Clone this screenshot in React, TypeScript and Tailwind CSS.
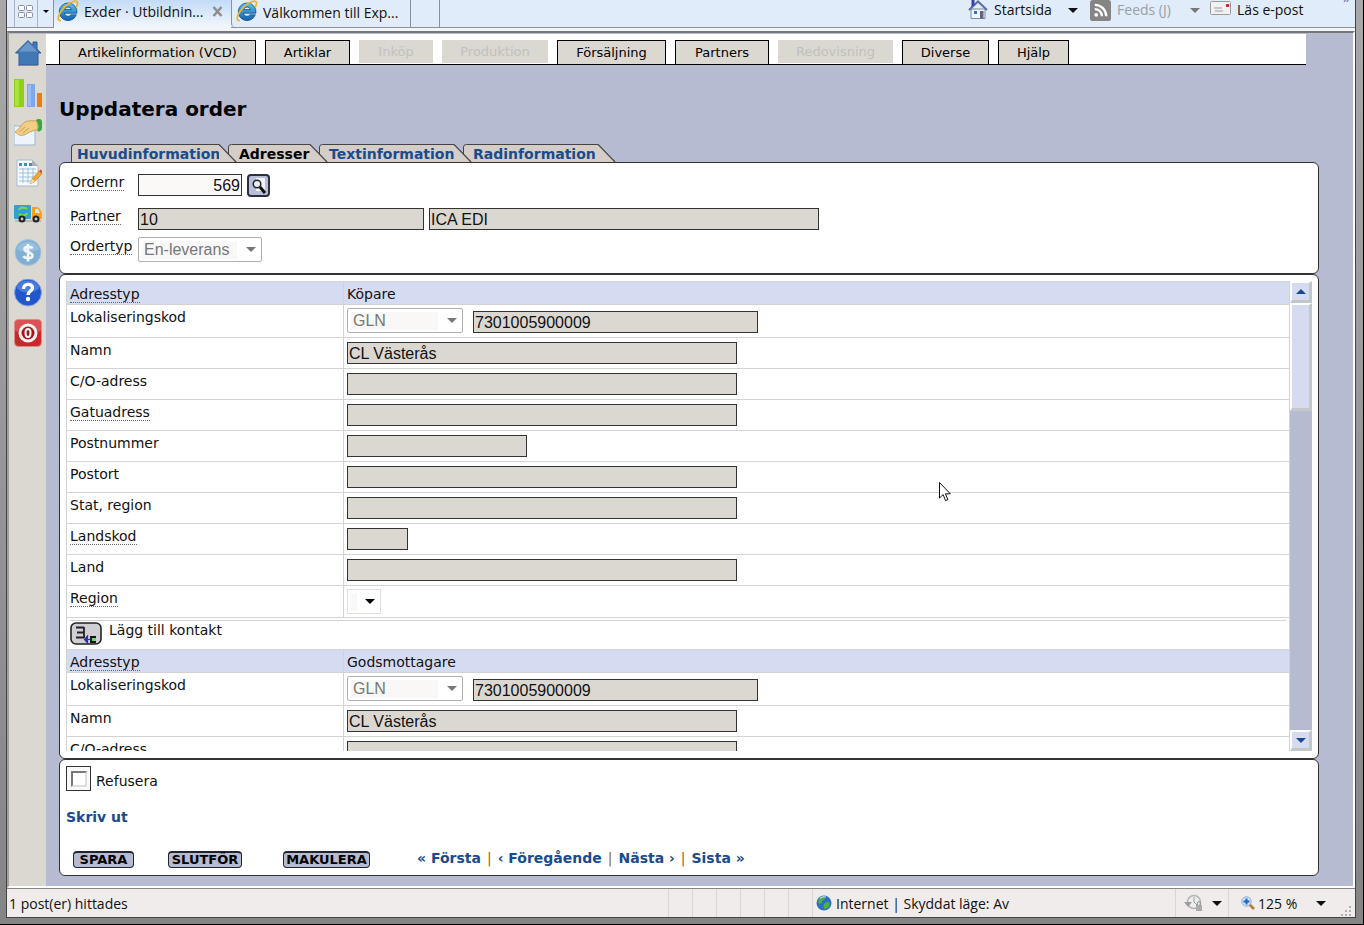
import { useId } from "react";
import type { ReactNode } from "react";
import clsx from "clsx";

const ui = "font-['Open_Sans','Noto_Sans',sans-serif]";
const field =
  "block h-[22px] border border-[#333] px-px pt-px font-['Liberation_Sans',Arial,sans-serif] text-base leading-5 text-[#111] outline-none";

const menu = [
  { label: "Artikelinformation (VCD)", width: "w-[197px]" },
  { label: "Artiklar", width: "w-[85px]" },
  { label: "Inköp", width: "w-[74px]", disabled: true },
  { label: "Produktion", width: "w-[106px]", disabled: true },
  { label: "Försäljning", width: "w-[109px]" },
  { label: "Partners", width: "w-[94px]" },
  { label: "Redovisning", width: "w-[115px]", disabled: true },
  { label: "Diverse", width: "w-[87px]" },
  { label: "Hjälp", width: "w-[71px]" },
];

const tabs = [
  { label: "Huvudinformation", width: "w-[148px] rounded-tl border-l pl-[5px]" },
  { label: "Adresser", width: "w-[73px] pl-[2px]", active: true },
  { label: "Textinformation", width: "w-[126px] pl-px" },
  { label: "Radinformation", width: "w-[126px] pl-px" },
];

const addressRows = [
  { label: "Namn", width: "w-[390px]", name: true },
  { label: "C/O-adress", width: "w-[390px]" },
  { label: "Gatuadress", width: "w-[390px]", help: true },
  { label: "Postnummer", width: "w-[180px]" },
  { label: "Postort", width: "w-[390px]" },
  { label: "Stat, region", width: "w-[390px]" },
  { label: "Landskod", width: "w-[61px]", help: true },
  { label: "Land", width: "w-[390px]" },
];

function Caret({ className }: { className?: string }) {
  return (
    <svg aria-hidden viewBox="0 0 10 5" className={clsx("h-[5px] w-[10px] shrink-0 fill-current", className)}>
      <path d="M0 0h10L5 5z" />
    </svg>
  );
}

function IeLogo() {
  return (
    <svg aria-hidden viewBox="0 0 22 22" className="size-[22px] shrink-0">
      <defs>
        <linearGradient id="ie" x1="0" y1="0" x2="0" y2="1">
          <stop offset="0" stopColor="#5cc3f2" />
          <stop offset="1" stopColor="#1260a8" />
        </linearGradient>
      </defs>
      <path
        d="M11 3a8.800 8.800 0 1 0 8.300 11.800h-5.400a3.600 3.600 0 0 1-6.500-1.600h12.500A8.900 8.900 0 0 0 11 3zM7.600 9.600a3.500 3.500 0 0 1 6.800 0z"
        fill="url(#ie)"
        stroke="#0d4f8f"
        strokeWidth=".8"
      />
      <path
        d="M4 20.600C.2 21.200.2 16.500 4.700 10.500 9.500 4 17 .2 19.600 1.500c1.600.9.9 3.500-.5 6"
        fill="none"
        stroke="#edb52c"
        strokeWidth="1.800"
      />
    </svg>
  );
}

function BrowserBar() {
  return (
    <div className={clsx(ui, "flex h-7 border-b border-[#8c9099] bg-[#e0ecf9] text-[14px] leading-5 text-[#111]")}>
      <button aria-label="Snabbflikar" className="ml-[7px] flex w-[24px] items-center justify-center border-x border-[#aab4c2] pb-1">
        <svg viewBox="0 0 16 14" className="h-[14px] w-[16px] fill-white stroke-[#8b8fa5]">
          <rect x=".5" y=".5" width="6" height="5" rx="1" />
          <rect x="8.500" y=".5" width="6" height="5" rx="1" />
          <rect x=".5" y="7.500" width="6" height="5" rx="1" />
          <rect x="8.500" y="7.500" width="6" height="5" rx="1" />
        </svg>
      </button>
      <button aria-label="Fliklista" className="flex w-[15px] items-center justify-center pb-1">
        <svg viewBox="0 0 6 3" className="h-[3px] w-[6px]">
          <path d="M0 0h6L3 3z" />
        </svg>
      </button>
      <div className="-mb-px flex w-[178px] items-start border-l border-[#8c9099] bg-linear-to-b from-[#c3dbf8] to-[#f3f7fc] pl-[3px]">
        <IeLogo />
        <span className="ml-[5px] mt-[2px] w-[128px] whitespace-nowrap">Exder · Utbildnin...</span>
        <button aria-label="Stäng flik" className="mt-[6px]">
          <svg viewBox="0 0 11 11" className="size-[11px]">
            <path d="M1.500 1l8 9M9.500 1l-8 9" stroke="#8e8e8e" strokeWidth="2.600" />
          </svg>
        </button>
      </div>
      <div className="flex w-[180px] items-start rounded-bl border-x border-[#8c9099] pl-1">
        <IeLogo />
        <span className="ml-[5px] mt-[3px] whitespace-nowrap">Välkommen till Exp...</span>
      </div>
      <div className="w-[29px] border-r border-[#8c9099]" />
      <div className="ml-auto flex items-start pr-[5px]">
        <svg aria-hidden viewBox="0 0 20 20" className="size-5">
          <path d="M3 9h14v9.500H3z" fill="#f4f5f9" stroke="#8088a0" />
          <path d="M1 10L10 1.500 19 10" fill="none" stroke="#5a6da8" strokeWidth="2" />
          <path d="M3.500 0h3v5l-3 2z" fill="#3044b0" />
          <path d="M6 11h3v3H6z" fill="#3f75bd" />
          <path d="M12 11h3.500v7.500H12z" fill="#5c6780" />
        </svg>
        <span className="ml-[6px] w-[74px]">Startsida</span>
        <Caret className="mt-2" />
        <svg aria-hidden viewBox="0 0 22 22" className="ml-3 size-[21px]">
          <rect width="22" height="22" rx="3" fill="#858585" />
          <circle cx="6.500" cy="15.500" r="2" fill="#fff" />
          <path d="M5 9.500a7.500 7.500 0 0 1 7.500 7.500M5 5a12 12 0 0 1 12 12" fill="none" stroke="#fff" strokeWidth="2.400" />
        </svg>
        <span className="ml-[6px] w-[73px] text-[#9a9fa6]">Feeds (J)</span>
        <Caret className="mt-2 text-[#777]" />
        <svg aria-hidden viewBox="0 0 21 14" className="ml-[10px] mt-px h-[14px] w-[21px]">
          <rect x=".5" y=".5" width="20" height="13" rx="1" fill="#f1f1f1" stroke="#9b9b9b" />
          <path d="M4 7h8M5 10h8" stroke="#9c9c9c" />
          <path d="M16 3h3v3h-3z" fill="#d62b2b" />
        </svg>
        <span className="ml-[6px] w-[106px]">Läs e-post</span>
        <span className="-mt-3 text-[#6a73a8]">»</span>
      </div>
    </div>
  );
}

function SideIcon({ label, children }: { label: string; children: ReactNode }) {
  return (
    <a href="#" aria-label={label} className="block size-7">
      <svg viewBox="0 0 28 28" className="size-7">
        {children}
      </svg>
    </a>
  );
}

function Sidebar() {
  return (
    <nav aria-label="Genvägar" className="flex w-[37px] shrink-0 flex-col items-center gap-3 bg-[#dbd8d1] pt-[5px]">
      <SideIcon label="Hem">
        <path d="M14 1.500L1.500 14H5v12h19V14h3l-4-4V3h-4v2.500h-1z" fill="#4378b6" stroke="#2d5c98" />
        <path d="M14 3L4.500 12.500h19z" fill="#79a5d6" opacity=".7" />
        <path d="M4 26.500h20" stroke="#8a8a86" />
      </SideIcon>
      <SideIcon label="Statistik">
        <rect x="0" y="0" width="10" height="28" fill="#8fd012" />
        <rect x="1" y="1" width="4" height="26" fill="#a9e23c" />
        <rect x="13" y="5" width="8" height="23" fill="#7da6ee" />
        <rect x="14" y="6" width="3" height="21" fill="#9abcf5" />
        <rect x="23" y="14" width="5" height="14" fill="#ee7c14" />
      </SideIcon>
      <SideIcon label="Avtal">
        <path d="M0 7h21v19H0z" fill="#eef4fb" stroke="#9db6cf" />
        <path d="M1 13c4-2 6-8 10-10 4-2 9-1 12-1l1 8c-4 2-7 2-10 4-4 3-9 3-10 1z" fill="#f2cd86" stroke="#c1934a" strokeWidth=".8" />
        <path d="M5 13l6-5M9 14l6-5" stroke="#c1934a" strokeWidth=".8" />
        <path d="M22 1c3-2 6-1 6 2v6c0 3-3 4-5 3 2-3 2-7-1-11z" fill="#35a83f" />
      </SideIcon>
      <SideIcon label="Kalkylblad">
        <path d="M3 1h15l6 6v20H3z" fill="#f6fafd" stroke="#a9b9c8" />
        <path d="M18 1l6 6h-6z" fill="#a9b2ba" />
        <path d="M5 5.500h3m2 0h3m2 0h3" stroke="#3c8fb8" strokeWidth="3" />
        <path d="M5 10h17M5 14h17M5 18h17M5 22h15M9 9v15M14 9v15M19 9v15" stroke="#9cc0da" />
        <path d="M16 25l2-5 7-8 3 2.500-7 8z" fill="#f0a531" stroke="#c77a1c" strokeWidth=".6" />
        <path d="M25 12l3 2.500 1-2-2.500-2z" fill="#d9472f" />
        <path d="M16 25l2-5 3 2.500z" fill="#f5dfb5" />
      </SideIcon>
      <SideIcon label="Leveranser">
        <rect x="0" y="6" width="17" height="14" rx="1" fill="#2fa2d0" />
        <path d="M5 11c1-3 6-3 8-1M13 14c-1 3-6 3-8 1" fill="none" stroke="#7fd451" strokeWidth="2.200" />
        <path d="M18 8h5c3 1 5 5 5 7v5H18z" fill="#f5a21c" />
        <path d="M21 10h3l2 4h-5z" fill="#d4ebf5" />
        <path d="M1 22h26" stroke="#999" />
        <circle cx="8" cy="20" r="3.500" fill="#222" />
        <circle cx="8" cy="20" r="1.400" fill="#ccc" />
        <circle cx="22" cy="20" r="3.500" fill="#222" />
        <circle cx="22" cy="20" r="1.400" fill="#ccc" />
      </SideIcon>
      <SideIcon label="Ekonomi">
        <circle cx="14" cy="13.500" r="13" fill="#7fb0d4" stroke="#a4c4dc" />
        <path d="M3 10a12 12 0 0 1 22 0c-7 4-15 4-22 0z" fill="#a6cae3" opacity=".6" />
        <path
          d="M18.500 9.500c-1-2-8-2.600-8 .8 0 3.400 8 2.700 8 6.300 0 3.600-7.500 3.200-9 .6M14 5v17.500"
          fill="none"
          stroke="#f1f5f8"
          strokeWidth="2.600"
        />
      </SideIcon>
      <SideIcon label="Hjälp">
        <circle cx="14" cy="13.500" r="13.500" fill="#2157cc" stroke="#8aa5dc" />
        <path d="M2.500 9a12.500 12.500 0 0 1 23 0c-7 6-16 6-23 0z" fill="#5d8ae6" opacity=".7" />
        <path d="M9.500 10c0-6 9-6 9-1 0 3.500-4.500 3-4.500 7" fill="none" stroke="#fff" strokeWidth="3.400" />
        <circle cx="14" cy="20" r="2.200" fill="#fff" />
      </SideIcon>
      <SideIcon label="Logga ut">
        <rect x=".5" y=".5" width="27" height="27" rx="4" fill="#c9272b" stroke="#dc8b88" />
        <path d="M1 4q0-3 3-3h20q3 0 3 3v8q-13 4-26 0z" fill="#e46e6c" opacity=".6" />
        <circle cx="14" cy="14" r="8" fill="#a5191d" stroke="#f3f0ef" strokeWidth="3" />
        <ellipse cx="14" cy="14" rx="2.500" ry="4" fill="none" stroke="#fff" strokeWidth="2" />
      </SideIcon>
    </nav>
  );
}

function MenuBar() {
  return (
    <nav className="mr-[47px] flex h-[31px] items-start gap-[9px] border-b border-black bg-white pl-[13px] pt-[6px]">
      {menu.map((item) => (
        <button
          key={item.label}
          disabled={item.disabled}
          className={clsx(
            "shrink-0 whitespace-nowrap bg-[#dbd8d1] text-[13px] leading-[22px]",
            item.width,
            item.disabled ? "h-[23px] text-[#c2c0bd]" : "h-6 border border-b-0 border-black text-black",
          )}
        >
          {item.label}
        </button>
      ))}
    </nav>
  );
}

function TabSlant({ last }: { last: boolean }) {
  return (
    <svg aria-hidden viewBox="0 0 18 18" className="h-[18px] w-[18px] shrink-0">
      <path d="M0 0L17 18H0z" fill="#d5cec8" />
      {!last && (
        <>
          <path d="M9 10V3q0-2.500 3-2.500h6V18h-1z" fill="#d5cec8" />
          <path d="M9.500 10V3q0-2.500 3-2.500H18" fill="none" stroke="#444" />
        </>
      )}
      <path d="M0 .5L17 18" fill="none" stroke="#444" strokeWidth="1.200" />
    </svg>
  );
}

function TabStrip() {
  return (
    <div className="flex pl-3">
      {tabs.map((tab, i) => (
        <div key={tab.label} className="flex">
          <a
            href="#"
            className={clsx(
              "h-[18px] whitespace-nowrap border-t border-[#444] bg-[#d5cec8] text-[14px] font-bold leading-[18px]",
              tab.width,
              tab.active ? "text-black" : "text-[#1a4b8c]",
            )}
          >
            {tab.label}
          </a>
          <TabSlant last={i === tabs.length - 1} />
        </div>
      ))}
    </div>
  );
}

function Panel({ className, children }: { className?: string; children: ReactNode }) {
  return <section className={clsx("rounded-md border border-[#333] bg-white", className)}>{children}</section>;
}

function Label({ htmlFor, help, children }: { htmlFor: string; help?: boolean; children: ReactNode }) {
  return (
    <label htmlFor={htmlFor} className={clsx(help && "border-b border-dotted border-[#666]")}>
      {children}
    </label>
  );
}

function Select({ id, value, wrap, inner }: { id: string; value: string; wrap: string; inner: string }) {
  return (
    <span
      className={clsx(
        "flex h-[25px] shrink-0 items-center border pl-[3px]",
        wrap,
        value ? "rounded-xs border-[#b0b0b0] text-[#777]" : "border-[#dddfe8] text-black",
      )}
    >
      <select
        id={id}
        disabled={!!value}
        className={clsx(
          "h-[18px] appearance-none bg-[#f9f8f6] pl-[2px] font-['Liberation_Sans',Arial,sans-serif] text-base leading-[18px] outline-none",
          inner,
        )}
      >
        <option>{value}</option>
      </select>
      <Caret className="ml-auto mr-[5px]" />
    </span>
  );
}

function OrderHeader() {
  return (
    <Panel className="h-[112px] pl-[10px] pt-[11px]">
      <div className="flex h-[34px] items-start">
        <div className="w-[68px] shrink-0 leading-4">
          <Label htmlFor="ordernr" help>Ordernr</Label>
        </div>
        <input id="ordernr" defaultValue="569" className={clsx(field, "w-[104px] bg-[#faf9f7] text-right")} />
        <button
          aria-label="Sök order"
          className="ml-[5px] flex size-[23px] items-center justify-center rounded border-2 border-[#2c2f3c] bg-[#b9bfda]"
        >
          <svg viewBox="0 0 18 18" className="size-[18px]">
            <path d="M6 1h9v13H6z" fill="#f3f3f6" />
            <circle cx="7" cy="7" r="3.800" fill="#e9ecf4" stroke="#222" strokeWidth="1.500" />
            <path d="M10 10l5 6" stroke="#111" strokeWidth="3" />
          </svg>
        </button>
      </div>
      <div className="flex h-[29px] items-start">
        <div className="w-[68px] shrink-0 leading-4">
          <Label htmlFor="partner" help>Partner</Label>
        </div>
        <input id="partner" readOnly value="10" className={clsx(field, "w-[286px] bg-[#dbd8d1]")} />
        <input
          aria-label="Partnernamn"
          readOnly
          value="ICA EDI"
          className={clsx(field, "ml-[5px] w-[390px] bg-[#dbd8d1]")}
        />
      </div>
      <div className="flex items-start">
        <div className="w-[68px] shrink-0 leading-[18px]">
          <Label htmlFor="ordertyp" help>Ordertyp</Label>
        </div>
        <Select id="ordertyp" value="En-leverans" wrap="w-[124px]" inner="w-[95px]" />
      </div>
    </Panel>
  );
}

function AddressBlock({ type, rows, contact }: { type: string; rows: typeof addressRows; contact?: boolean }) {
  const id = useId();
  const cell = "border-l border-t border-[#d3d3d3] px-[3px] align-top";
  return (
    <tbody>
      <tr className="h-[23px] bg-[#d5dbf1]">
        <th scope="row" className={clsx(cell, "pt-[2px] text-left font-normal")}>
          <span className="border-b border-dotted border-[#666]">Adresstyp</span>
        </th>
        <td className={clsx(cell, "pt-[2px]")}>{type}</td>
      </tr>
      <tr className="h-[33px]">
        <td className={clsx(cell, "pt-[2px]")}>
          <Label htmlFor={`${id}kod`}>Lokaliseringskod</Label>
        </td>
        <td className={clsx(cell, "pt-[3px]")}>
          <div className="flex items-end gap-[10px]">
            <Select id={`${id}kod`} value="GLN" wrap="w-[116px]" inner="w-[87px]" />
            <input
              aria-label="Lokaliseringsnummer"
              readOnly
              value="7301005900009"
              className={clsx(field, "w-[285px] bg-[#dbd8d1]")}
            />
          </div>
        </td>
      </tr>
      {rows.map((row) => (
        <tr key={row.label} className="h-[31px]">
          <td className={clsx(cell, "pt-[2px]")}>
            <Label htmlFor={id + row.label} help={row.help}>{row.label}</Label>
          </td>
          <td className={clsx(cell, "pt-[4px]")}>
            <input
              id={id + row.label}
              readOnly
              value={row.name ? "CL Västerås" : ""}
              className={clsx(field, "bg-[#dbd8d1]", row.width)}
            />
          </td>
        </tr>
      ))}
      {contact && (
        <>
          <tr className="h-[32px]">
            <td className={clsx(cell, "pt-[2px]")}>
              <Label htmlFor={`${id}region`} help>Region</Label>
            </td>
            <td className={clsx(cell, "pt-[3px]")}>
              <Select id={`${id}region`} value="" wrap="w-[34px]" inner="w-[6px]" />
            </td>
          </tr>
          <tr className="h-[32px]">
            <td colSpan={2} className={clsx(cell, "pt-[2px]")}>
              <button className="flex w-full items-start gap-[7px] border-t border-[#d3d3d3] pt-px text-left">
                <svg aria-hidden viewBox="0 0 32 23" className="h-[23px] w-8">
                  <rect x="1" y="1" width="30" height="21" rx="5" fill="#cfcfd4" stroke="#222" strokeWidth="1.600" />
                  <path d="M6 5.500h8M7 10.500h7M6 15.500h8M14 5v11" fill="none" stroke="#222" strokeWidth="1.800" />
                  <path d="M14 17.500h6M17.500 14l-3 3.500 3 3.500z" fill="#2a2fc0" stroke="#2a2fc0" strokeWidth="1.200" />
                  <path d="M26 15h-5v5h5" fill="none" stroke="#111" strokeWidth="1.800" />
                  <path d="M22 16h4v3h-4z" fill="#5fdc70" />
                </svg>
                <span className="leading-4">Lägg till kontakt</span>
              </button>
            </td>
          </tr>
        </>
      )}
    </tbody>
  );
}

function ScrollBar() {
  const bevel = "border-b-3 border-l-2 border-r-3 border-t-2 border-b-[#c3c7c8] border-l-white border-r-[#c3c7c8] border-t-white bg-[#d5dbf1]";
  return (
    <div className="flex w-[23px] shrink-0 flex-col border-l border-[#d3d3d3] bg-[#b6bbd2]">
      <button aria-label="Rulla upp" className={clsx("flex h-[22px] items-center justify-center text-[#164a8c]", bevel)}>
        <Caret className="rotate-180" />
      </button>
      <div className={clsx("h-[108px]", bevel)} />
      <button
        aria-label="Rulla ned"
        className={clsx("mt-auto flex h-[21px] items-center justify-center text-[#164a8c]", bevel)}
      >
        <Caret />
      </button>
    </div>
  );
}

function Footer() {
  const action =
    "mt-[3px] h-[17px] rounded border border-t-2 border-[#22242e] bg-[#b6bbd2] text-[13px] font-bold leading-[14px] text-black";
  const divider = <span aria-hidden className="font-normal text-[#8c6a1c]">|</span>;
  return (
    <Panel className="h-[117px] px-[6px] pt-[6px]">
      <div className="flex items-start gap-[5px]">
        <span className="flex size-[25px] items-center justify-center border border-[#333] bg-[#faf9f7]">
          <input
            id="refusera"
            type="checkbox"
            className="size-4 appearance-none border-2 border-b-[#ddd] border-l-[#777] border-r-[#ddd] border-t-[#777] bg-white"
          />
        </span>
        <label htmlFor="refusera" className="mt-[5px]">Refusera</label>
      </div>
      <a href="#" className="mt-4 block w-fit font-bold text-[#1a4b8c]">Skriv ut</a>
      <div className="mt-[21px] flex items-start pl-[7px]">
        <button className={clsx(action, "w-[61px]")}>SPARA</button>
        <button className={clsx(action, "ml-[34px] w-[74px]")}>SLUTFÖR</button>
        <button className={clsx(action, "ml-[41px] w-[87px]")}>MAKULERA</button>
        <nav aria-label="Bläddra" className="ml-[47px] flex gap-[6px] whitespace-nowrap font-bold text-[#1a4b8c]">
          <a href="#">« Första</a>
          {divider}
          <a href="#">‹ Föregående</a>
          {divider}
          <a href="#">Nästa ›</a>
          {divider}
          <a href="#">Sista »</a>
        </nav>
      </div>
    </Panel>
  );
}

function StatusBar() {
  return (
    <footer
      className={clsx(ui, "flex h-[29px] border-t border-[#858585] bg-[#f0eceb] text-[14px] leading-[29px] text-[#111]")}
    >
      <span className="pl-[2px]">1 post(er) hittades</span>
      <div className="ml-auto flex">
        {[1, 2, 3, 4, 5, 6].map((n) => (
          <span key={n} className="w-6 border-l border-[#d9d5d4]" />
        ))}
        <div className="flex w-[363px] items-center border-l border-[#d9d5d4] pl-[3px]">
          <svg aria-hidden viewBox="0 0 16 16" className="mr-[4px] size-4">
            <circle cx="8" cy="8" r="7.500" fill="#2c6fc4" />
            <path d="M3 3c3-2 6-2 6 0s-3 2-3 4-2 2-4 1zM9 8c2-2 5-1 5 1s-3 5-5 5-2-4 0-6z" fill="#4cb046" />
            <path d="M4 3q3-2 6-1" stroke="#d4e8fa" fill="none" />
          </svg>
          Internet | Skyddat läge: Av
        </div>
        <div className="flex w-[53px] items-center gap-[8px] border-l border-[#d9d5d4] pl-2">
          <svg aria-hidden viewBox="0 0 20 18" className="h-[18px] w-5">
            <circle cx="10" cy="8" r="6.500" fill="#eee" stroke="#b5b5b5" strokeWidth="1.500" />
            <path d="M10 3v5l3 3" fill="none" stroke="#999" />
            <path d="M0 8h8L4 13z" fill="#9c9c9c" />
            <path d="M12 11h6v6h-6z" fill="#aaa" />
            <path d="M13.500 11V9a1.500 1.500 0 0 1 3 0v2" fill="none" stroke="#999" />
          </svg>
          <Caret />
        </div>
        <div className="flex w-[127px] items-center border-l border-[#d9d5d4] pl-3">
          <svg aria-hidden viewBox="0 0 14 14" className="mr-[3px] size-[14px]">
            <path d="M8 8l5 5" stroke="#b87a35" strokeWidth="2.600" />
            <circle cx="5.500" cy="5.500" r="4.700" fill="#cfe4fa" stroke="#88aacc" />
            <path d="M5.500 2.500v6M2.500 5.500h6" stroke="#1667c0" strokeWidth="2" />
          </svg>
          <span className="w-[58px]">125 %</span>
          <Caret />
          <svg aria-hidden viewBox="0 0 12 12" className="ml-auto mr-[3px] size-3 self-end fill-[#b5b0ae]">
            <path d="M9 1h2v2H9zM9 5h2v2H9zM9 9h2v2H9zM5 5h2v2H5zM5 9h2v2H5zM1 9h2v2H1z" />
          </svg>
        </div>
      </div>
    </footer>
  );
}

export default function App() {
  return (
    <div className="flex min-h-screen flex-col border-b border-r border-black bg-[#9b9b9b] bg-linear-to-b from-[#a8a8a8] to-[#858585] pb-[6px] pl-[6px] pr-[7px] font-['DejaVu_Sans',Verdana,sans-serif] text-[14px] leading-5 text-[#111]">
      <div className="flex flex-1 flex-col border-x border-b border-[#444] bg-[#f3f4f7]">
        <BrowserBar />
        <div className="mt-[3px] flex flex-1 border-2 border-b-white border-l-[#a0a0a0] border-r-white border-t-[#777] bg-[#b6bbd2] pt-px">
          <Sidebar />
          <main className="relative min-w-0 flex-1">
            <MenuBar />
            <div className="pb-[9px] pl-[13px] pr-[34px] pt-[30px]">
              <h1 className="text-[20px] font-bold leading-7 text-black">Uppdatera order</h1>
              <div className="mt-[21px]">
                <TabStrip />
              </div>
              <OrderHeader />
              <Panel className="px-[6px] pb-[7px] pt-[6px]">
                <div className="flex h-[470px] overflow-hidden">
                  <div className="min-w-0 flex-1 overflow-hidden">
                    <table className="w-full table-fixed border-separate border-spacing-0">
                      <colgroup>
                        <col className="w-[277px]" />
                        <col />
                      </colgroup>
                      <AddressBlock type="Köpare" rows={addressRows} contact />
                      <AddressBlock type="Godsmottagare" rows={addressRows.slice(0, 2)} />
                    </table>
                  </div>
                  <ScrollBar />
                </div>
              </Panel>
              <Footer />
            </div>
            {/* mouse pointer */}
            <svg aria-hidden viewBox="0 0 12 20" className="absolute left-[893px] top-[448px] h-5 w-3">
              <path d="M.5.5v15.500l3.600-3.400 2.500 6 2.300-1-2.500-5.800h4.900z" fill="#fff" stroke="#111" />
            </svg>
          </main>
        </div>
        <StatusBar />
      </div>
    </div>
  );
}
